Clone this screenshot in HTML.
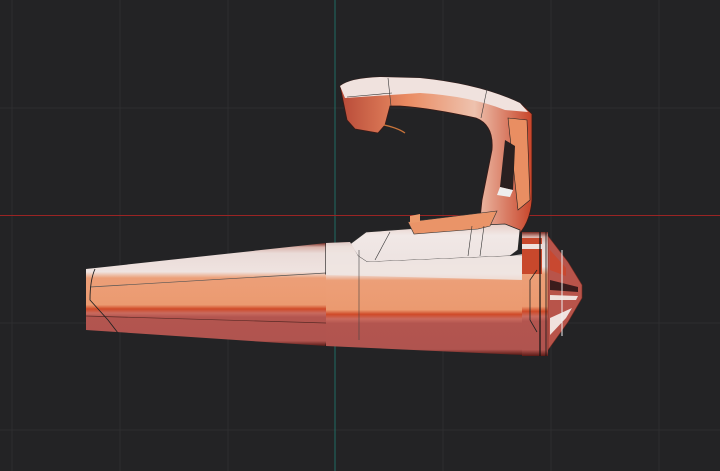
<!DOCTYPE html>
<html><head><style>
html,body{margin:0;padding:0;background:#232325;width:720px;height:471px;overflow:hidden}
</style></head><body>
<svg width="720" height="471" viewBox="0 0 720 471" xmlns="http://www.w3.org/2000/svg">
<defs>
<linearGradient id="g" x1="0" y1="0" x2="0" y2="1">
<stop offset="0" stop-color="#7a2a22"/>
<stop offset="0.04" stop-color="#d9b3ab"/>
<stop offset="0.1" stop-color="#eadbd8"/>
<stop offset="0.28" stop-color="#efe3e0"/>
<stop offset="0.34" stop-color="#ec9f78"/>
<stop offset="0.6" stop-color="#eb9a70"/>
<stop offset="0.64" stop-color="#cf4a28"/>
<stop offset="0.68" stop-color="#c96a5e"/>
<stop offset="0.72" stop-color="#b3554f"/>
<stop offset="0.95" stop-color="#b0544f"/>
<stop offset="1" stop-color="#5a1a16"/>
</linearGradient>
<linearGradient id="hv" x1="0" y1="0" x2="1" y2="0">
<stop offset="0" stop-color="#b84a38"/>
<stop offset="0.35" stop-color="#e98b62"/>
<stop offset="0.7" stop-color="#eec2ae"/>
<stop offset="1" stop-color="#c8452a"/>
</linearGradient>
<linearGradient id="w" x1="0" y1="0" x2="0" y2="1">
<stop offset="0" stop-color="#e7cfc8"/>
<stop offset="0.3" stop-color="#f1e8e6"/>
<stop offset="1" stop-color="#ede3e1"/>
</linearGradient>
</defs>
<g stroke="#2e2e30" stroke-width="1">
<line x1="12" y1="0" x2="12" y2="471"/><line x1="120" y1="0" x2="120" y2="471"/>
<line x1="228" y1="0" x2="228" y2="471"/><line x1="443" y1="0" x2="443" y2="471"/>
<line x1="551" y1="0" x2="551" y2="471"/><line x1="659" y1="0" x2="659" y2="471"/>
<line x1="0" y1="108" x2="720" y2="108"/><line x1="0" y1="323" x2="720" y2="323"/>
<line x1="0" y1="430" x2="720" y2="430"/>
</g>
<line x1="335" y1="0" x2="335" y2="471" stroke="#1f6b62" stroke-width="1"/>
<line x1="0" y1="215.5" x2="720" y2="215.5" stroke="#9a2424" stroke-width="1"/>

<!-- handle -->
<path d="M340,86 Q350,78 380,77 L420,78 Q480,84 520,103 L532,114 L532,200 Q530,225 515,238 L478,238 L482,200 L492,150 Q494,125 476,118 Q430,108 400,106 L390,106 L385,125 L378,133 L355,129 L347,120 Z" fill="url(#hv)" stroke="#3a1a16" stroke-width="0.8"/>
<path d="M340,86 Q350,78 380,77 L420,78 Q480,84 520,103 L528,112 L505,110 Q470,96 420,93 L345,98 Z" fill="#f0e2de"/>
<path d="M508,118 L527,120 L530,200 L518,210 Z" fill="#e98e62" stroke="#222" stroke-width="0.6"/>
<path d="M505,140 L515,146 L513,190 L500,187 Z" fill="#2a2020"/>
<path d="M500,187 L513,190 L510,197 L497,195 Z" fill="#eee"/>
<path d="M384,125 Q398,128 405,133" fill="none" stroke="#c8733a" stroke-width="1.3"/>
<line x1="347" y1="97" x2="392" y2="93" stroke="#333" stroke-width="0.6"/>
<line x1="388" y1="78" x2="391" y2="106" stroke="#333" stroke-width="0.6"/>
<line x1="487" y1="89" x2="481" y2="118" stroke="#333" stroke-width="0.6"/>

<!-- housing top -->
<path d="M350,244 L366,232 L420,228 L505,224 L520,230 L518,250 L510,256 L367,262 L358,256 Z" fill="url(#w)" stroke="#2a2a2a" stroke-width="0.8"/>
<path d="M408,222 L497,211 L490,226 L478,229 L414,234 Z" fill="#ea9468" stroke="#333" stroke-width="0.6"/>
<path d="M410,216 L420,214 L420,222 L410,223 Z" fill="#ec9a6c"/>
<line x1="472" y1="226" x2="468" y2="256" stroke="#333" stroke-width="0.6"/>
<line x1="484" y1="226" x2="480" y2="256" stroke="#333" stroke-width="0.6"/>
<line x1="390" y1="232" x2="375" y2="260" stroke="#333" stroke-width="0.6"/>

<!-- nozzle -->
<path d="M86,269 L326,243 L326,346 L86,330 Z" fill="url(#g)"/>
<path d="M90,287 L326,273" stroke="#555" stroke-width="0.7" fill="none"/>
<path d="M86,316 L326,323" stroke="#5a2a26" stroke-width="0.7" fill="none"/>
<path d="M95,269 Q90,280 90,300 L108,320 L118,333" fill="none" stroke="#222" stroke-width="0.9"/>
<path d="M326,243 L326,274 L338,280 L339,318 L330,324 L326,346" fill="none" stroke="#1a1a1a" stroke-width="1.2"/>
<!-- body -->
<path d="M326,243 L350,242 L358,256 L367,262 L510,256 L523,256 L523,355 L326,346 Z" fill="url(#g)"/>
<path d="M326,243 L350,242 L358,256 L367,262 L510,256 L523,254 L523,280 L326,275 Z" fill="#efe5e2" opacity="0.85"/>
<line x1="359" y1="250" x2="359" y2="340" stroke="#444" stroke-width="0.6"/>
<!-- rear cap -->
<rect x="522" y="232" width="26" height="124" fill="url(#g)"/>
<rect x="522" y="238" width="20" height="36" fill="#c8482c"/>
<rect x="522" y="244" width="20" height="5" fill="#efe2de"/>
<line x1="540" y1="232" x2="540" y2="356" stroke="#111" stroke-width="1.2"/>
<line x1="546" y1="232" x2="546" y2="356" stroke="#111" stroke-width="0.8"/>
<path d="M537,270 L530,280 L530,320 L537,332" fill="none" stroke="#222" stroke-width="0.8"/>
<!-- grille -->
<path d="M548,236 L568,262 L582,285 L582,298 L568,322 L548,350 Z" fill="#b8544a" stroke="#7a2a20" stroke-width="0.6"/>
<path d="M550,280 L578,287 L578,292 L550,290 Z" fill="#3a1c1c"/>
<path d="M550,295 L578,296 L576,300 L550,300 Z" fill="#efe0dc"/>
<path d="M550,318 L572,308 L566,318 L550,335 Z" fill="#f0e2de"/>
<path d="M550,250 L566,268 L566,276 L550,270 Z" fill="#c84830"/>
<line x1="562" y1="250" x2="562" y2="336" stroke="#eee" stroke-width="1"/>
</svg>
</body></html>
